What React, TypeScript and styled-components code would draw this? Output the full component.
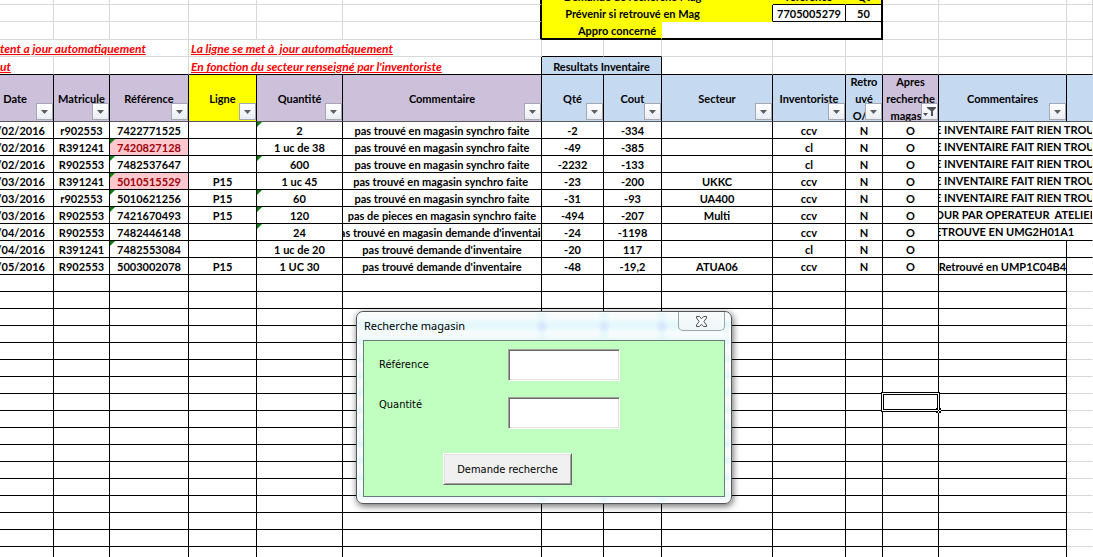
import React from 'react';
import styled, { createGlobalStyle, css } from 'styled-components';

const color = {
  line: '#000000',
  grid: '#d8d8d8',
  lilac: '#ccc0da',
  blue: '#c5d9f1',
  yellow: '#ffff00',
  form: '#c0ffc0',
};

const GlobalStyle = createGlobalStyle`
  *, *::before, *::after { box-sizing: border-box; }
  body {
    margin: 0;
    background: #fff;
    overflow: hidden;
  }
`;

const Workbook = styled.main`
  position: relative;
  width: 100%;
  height: 100vh;
  overflow: hidden;
  background: #fff;
  color: #000;
  font: bold 11px/16px Lato, Carlito, Calibri, sans-serif;
`;

const Sheet = styled.table`
  width: 100%;
  table-layout: fixed;
  border-collapse: separate;
  border-spacing: 0;
`;

const Column = styled.col<{ $width?: number }>`
  width: ${(p) => (p.$width ? `${p.$width}px` : 'auto')};
`;

const Row = styled.tr<{ $height?: number }>`
  height: ${(p) => p.$height ?? 17}px;
`;

type CellProps = { $right?: string; $bottom?: string; $thickRight?: boolean; $thickBottom?: boolean; $fill?: string };

const cellFrame = css<CellProps>`
  position: relative;
  padding: 0;
  background: ${(p) => p.$fill ?? 'transparent'};
  border: 0 solid;
  border-right: ${(p) => (p.$thickRight ? 2 : 1)}px solid ${(p) => p.$right ?? color.line};
  border-bottom: ${(p) => (p.$thickBottom ? 2 : 1)}px solid ${(p) => p.$bottom ?? color.line};
`;

const Cell = styled.td<CellProps>`
  ${cellFrame}
  vertical-align: bottom;
`;

const PlainCell = styled(Cell).attrs({ $right: color.grid, $bottom: color.grid })``;

const HeadCell = styled.th<CellProps>`
  ${cellFrame}
  border-bottom-color: #595959;
`;

const HeadText = styled.div<{ $inset?: number }>`
  display: flex;
  align-items: center;
  justify-content: center;
  height: 46px;
  padding-right: ${(p) => p.$inset ?? 0}px;
  overflow: hidden;
  line-height: 17px;
  text-align: center;
`;

const Value = styled.div<{ $align?: string; $tone?: string; $pad?: number }>`
  display: flex;
  justify-content: ${(p) => p.$align ?? 'center'};
  height: 16px;
  padding-right: ${(p) => p.$pad ?? 0}px;
  overflow: hidden;
  line-height: 18px;
  white-space: pre;
  color: ${(p) => p.$tone ?? 'inherit'};
`;

const Remark = styled.div`
  height: 16px;
  overflow: hidden;
  text-indent: -4px;
  white-space: pre;
`;

const Spill = styled.div<{ $height?: number; $end?: boolean }>`
  position: relative;
  z-index: 1;
  display: flex;
  justify-content: ${(p) => (p.$end ? 'flex-end' : 'center')};
  align-items: flex-end;
  height: ${(p) => p.$height ?? 16}px;
  padding-right: ${(p) => (p.$end ? 5 : 0)}px;
  line-height: 14px;
  white-space: nowrap;
`;

const Note = styled.div`
  padding-left: 2px;
  height: 16px;
  overflow: hidden;
  color: #f00;
  font-size: 12px;
  font-style: italic;
  line-height: 18px;
  text-decoration: underline;
  white-space: pre;
`;

const EdgeNote = styled(Note)`
  padding-left: 0;
`;

const ErrorMark = styled.span`
  position: absolute;
  top: 0;
  left: 0;
  border-top: 5px solid #008000;
  border-right: 5px solid transparent;
`;

const FilterButton = styled.button`
  position: absolute;
  right: 0;
  bottom: 1px;
  display: flex;
  align-items: center;
  justify-content: center;
  width: 17px;
  height: 17px;
  padding: 0;
  border: 1px solid #a3a8b3;
  background: linear-gradient(#fff, #e9edf3);
`;

const Selection = styled.span`
  position: absolute;
  inset: -2px;
  z-index: 1;
  border: 3px double #000;
  background: #fff;
`;

const FillHandle = styled.svg`
  position: absolute;
  right: -4px;
  bottom: -4px;
  width: 5px;
  height: 5px;
`;

const Dialog = styled.form`
  position: absolute;
  z-index: 2;
  top: 311px;
  left: 356px;
  width: 376px;
  padding: 0 6px 6px;
  border: 1px solid #53585c;
  border-radius: 7px;
  background:
    radial-gradient(circle at 185px 14px, #d6e2fc 0, transparent 7px),
    radial-gradient(circle at 247px 14px, #d6e2fc 0, transparent 7px),
    radial-gradient(circle at 305px 14px, #d6e2fc 0, transparent 7px),
    linear-gradient(90deg, transparent 178px, #e6f8fc 185px, transparent 192px, transparent 240px, #e6f8fc 247px, transparent 254px, transparent 298px, #e6f8fc 305px, transparent 312px),
    linear-gradient(transparent 8px, #e4f8fd 14px, transparent 21px),
    repeating-linear-gradient(#f8fbfc 0 5px, #e2f7fc 14px, #f8fbfc 17px);
  box-shadow: inset 0 0 0 1px rgba(255, 255, 255, 0.8), 1px 2px 7px rgba(0, 0, 0, 0.6);
  color: #000;
  font: 11px/16px 'DejaVu Sans Condensed', Tahoma, sans-serif;
`;

const TitleBar = styled.header`
  display: flex;
  justify-content: space-between;
  height: 28px;
`;

const Title = styled.h2`
  margin: 0;
  padding: 6px 1px;
  font: 11px/16px 'Noto Sans', 'Segoe UI', sans-serif;
`;

const CloseButton = styled.button`
  display: flex;
  align-items: center;
  justify-content: center;
  width: 47px;
  height: 19px;
  padding: 0;
  border: 1px solid #9aa6a8;
  border-top: 0;
  border-radius: 0 0 5px 5px;
  background: linear-gradient(#f8fbfb, #eef6f7);
`;

const Panel = styled.div`
  display: flex;
  flex-direction: column;
  height: 157px;
  padding: 8px 15px 0;
  border: 1px solid #6c7c7c;
  background: ${color.form};
`;

const Field = styled.div`
  display: flex;
  justify-content: space-between;
  margin-bottom: 16px;
  padding-right: 89px;
`;

const Label = styled.label<{ $top: number }>`
  padding-top: ${(p) => p.$top}px;
`;

const TextBox = styled.input`
  width: 112px;
  height: 32px;
  padding: 0 4px;
  border: 1px solid;
  border-color: #a0a0a0 #fff #fff #a0a0a0;
  border-radius: 0;
  box-shadow: inset 1px 1px 0 #696969, inset -1px -1px 0 #e3e3e3;
  background: #fff;
  font: inherit;
  outline: 0;
`;

const SubmitButton = styled.button`
  width: 129px;
  height: 32px;
  margin: 8px 0 0 64px;
  padding: 1px 0 0;
  border: 1px solid;
  border-color: #fff #696969 #696969 #fff;
  box-shadow: inset 1px 1px 0 #e3e3e3, inset -1px -1px 0 #a0a0a0;
  background: #f0f0f0;
  color: #000;
  font: inherit;
`;

const columns = [54, 56, 79, 68, 86, 199, 62, 58, 111, 73, 37, 56, 128];

type Heading = { text: string; fill: string; inset?: number; filtered?: boolean };

const headings: Heading[] = [
  { text: 'Date', fill: color.lilac, inset: 23 },
  { text: 'Matricule', fill: color.lilac },
  { text: 'Référence', fill: color.lilac },
  { text: 'Ligne', fill: color.yellow },
  { text: 'Quantité', fill: color.lilac },
  { text: 'Commentaire', fill: color.lilac },
  { text: 'Qté', fill: color.blue },
  { text: 'Cout', fill: color.blue },
  { text: 'Secteur', fill: color.blue },
  { text: 'Inventoriste', fill: color.blue },
  { text: 'Retro uvé O/N', fill: color.blue },
  { text: 'Apres recherche magasin', fill: color.lilac, filtered: true },
  { text: 'Commentaires', fill: color.blue },
];

type Entry = {
  cells: string[];
  note: string;
  spills?: boolean;
  refMark?: boolean;
  qtyMark?: boolean;
  duplicate?: boolean;
};

const noStock = 'E INVENTAIRE FAIT RIEN TROUVE';

const entries: Entry[] = [
  { cells: ['/02/2016', 'r902553', '7422771525', '', '2', 'pas trouvé en magasin synchro faite', '-2', '-334', '', 'ccv', 'N', 'O'], note: noStock, spills: true, qtyMark: true },
  { cells: ['/02/2016', 'R391241', '7420827128', '', '1 uc de 38', 'pas trouvé en magasin synchro faite', '-49', '-385', '', 'cl', 'N', 'O'], note: noStock, spills: true, refMark: true, duplicate: true },
  { cells: ['/02/2016', 'R902553', '7482537647', '', '600', 'pas trouve en magasin synchro faite', '-2232', '-133', '', 'cl', 'N', 'O'], note: noStock, spills: true, refMark: true, qtyMark: true },
  { cells: ['/03/2016', 'R391241', '5010515529', 'P15', '1 uc 45', 'pas trouvé en magasin synchro faite ', '-23', '-200', 'UKKC', 'ccv', 'N', 'O'], note: noStock, spills: true, refMark: true, duplicate: true },
  { cells: ['/03/2016', 'r902553', '5010621256', 'P15', '60', 'pas trouvé en magasin synchro faite', '-31', '-93', 'UA400', 'ccv', 'N', 'O'], note: noStock, spills: true, refMark: true, qtyMark: true },
  { cells: ['/03/2016', 'R902553', '7421670493', 'P15', '120', 'pas de pieces en magasin synchro faite', '-494', '-207', 'Multi', 'ccv', 'N', 'O'], note: 'OUR PAR OPERATEUR  ATELIER', spills: true, refMark: true, qtyMark: true },
  { cells: ['/04/2016', 'R902553', '7482446148', '', '24', "pas trouvé en magasin demande d'inventaire", '-24', '-1198', '', 'ccv', 'N', 'O'], note: 'ETROUVE EN UMG2H01A1', spills: true, qtyMark: true },
  { cells: ['/04/2016', 'R391241', '7482553084', '', '1 uc de 20', "pas trouvé demande d'inventaire", '-20', '117', '', 'cl', 'N', 'O'], note: '', refMark: true },
  { cells: ['/05/2016', 'R902553', '5003002078', 'P15', '1 UC 30', "pas trouvé demande d'inventaire", '-48', '-19,2', 'ATUA06', 'ccv', 'N', 'O'], note: 'Retrouvé en UMP1C04B4' },
];

const blankRows = Array.from({ length: 17 }, (_, i) => i);
const ACTIVE_ROW = 7;
const ACTIVE_COLUMN = 11;
const DATE_COLUMN = 0;
const REF_COLUMN = 2;
const QTY_COLUMN = 4;

function Blank({ count }: { count: number }) {
  return (
    <>
      {Array.from({ length: count }, (_, i) => (
        <PlainCell key={i} />
      ))}
    </>
  );
}

function ArrowIcon() {
  return (
    <svg width="7" height="4" viewBox="0 0 7 4" aria-hidden="true">
      <path d="M0 0h7L3.5 4z" fill="#5b5f68" />
    </svg>
  );
}

function FunnelIcon() {
  return (
    <svg width="13" height="13" viewBox="0 0 13 13" aria-hidden="true">
      <path d="M4 2h9v1l-3 3v5H8V6L4 3z" fill="#4d5058" />
      <path d="M0 8h5L2.5 11z" fill="#4d5058" />
    </svg>
  );
}

function SearchDialog() {
  return (
    <Dialog aria-label="Recherche magasin" onSubmit={(e) => e.preventDefault()}>
      <TitleBar>
        <Title>Recherche magasin</Title>
        <CloseButton type="button" aria-label="Fermer">
          <svg width="13" height="11" viewBox="0 0 13 11" aria-hidden="true">
            <path
              d="M1.5.5h3l2 2.300 2-2.300h3V2L8.800 5.500l2.700 3.500v1.500h-3l-2-2.300-2 2.300h-3V9l2.700-3.500L1.500 2z"
              fill="#fff"
              stroke="#4b5062"
              strokeWidth="1"
            />
          </svg>
        </CloseButton>
      </TitleBar>
      <Panel>
        <Field>
          <Label htmlFor="reference" $top={8}>Référence</Label>
          <TextBox id="reference" type="text" />
        </Field>
        <Field>
          <Label htmlFor="quantite" $top={0}>Quantité</Label>
          <TextBox id="quantite" type="text" />
        </Field>
        <SubmitButton type="submit">Demande recherche</SubmitButton>
      </Panel>
    </Dialog>
  );
}

export default function App() {
  return (
    <Workbook>
      <GlobalStyle />
      <Sheet>
        <colgroup>
          {columns.map((width, i) => (
            <Column key={i} $width={width} />
          ))}
          <Column />
        </colgroup>
        <thead>
          <Row $height={5}>
            <Blank count={5} />
            <Cell $thickRight $bottom={color.grid} />
            <Cell $fill={color.yellow} $right={color.yellow} $bottom={color.yellow} />
            <Cell $fill={color.yellow} $right={color.yellow} $bottom={color.yellow}>
              <Spill $height={4}>Demande de recherche Mag</Spill>
            </Cell>
            <Cell $fill={color.yellow} $right={color.yellow} $bottom={color.yellow} />
            <Cell $fill={color.yellow} $right={color.yellow}>
              <Spill $height={4}>référence</Spill>
            </Cell>
            <Cell $fill={color.yellow} $thickRight>
              <Spill $height={4}>Qt</Spill>
            </Cell>
            <Blank count={3} />
          </Row>
          <Row>
            <Blank count={5} />
            <Cell $thickRight $bottom={color.grid} />
            <Cell $fill={color.yellow} $right={color.yellow} $bottom={color.yellow} />
            <Cell $fill={color.yellow} $right={color.yellow} $bottom={color.yellow}>
              <Spill>Prévenir si retrouvé en Mag</Spill>
            </Cell>
            <Cell $fill={color.yellow} $bottom={color.yellow} />
            <Cell><Spill>7705005279</Spill></Cell>
            <Cell $thickRight><Spill>50</Spill></Cell>
            <Blank count={3} />
          </Row>
          <Row $height={18}>
            <Blank count={5} />
            <Cell $thickRight $bottom={color.grid} />
            <Cell colSpan={2} $fill={color.yellow} $right={color.yellow} $thickBottom>
              <Spill $end>Appro concerné</Spill>
            </Cell>
            <Cell colSpan={3} $thickRight $thickBottom />
            <Blank count={3} />
          </Row>
          <Row>
            <PlainCell colSpan={3}>
              <EdgeNote>tent a jour automatiquement</EdgeNote>
            </PlainCell>
            <PlainCell colSpan={3}>
              <Note>La ligne se met à  jour automatiquement</Note>
            </PlainCell>
            <Cell $right={color.grid} />
            <Cell $right={color.grid} />
            <Blank count={6} />
          </Row>
          <Row $height={18}>
            <Cell $right={color.grid}>
              <EdgeNote>ut</EdgeNote>
            </Cell>
            <Cell $right={color.grid} />
            <Cell $right={color.grid} />
            <Cell colSpan={3}>
              <Note>En fonction du secteur renseigné par l'inventoriste</Note>
            </Cell>
            <Cell colSpan={2} $fill={color.blue}>
              <Value>Resultats Inventaire</Value>
            </Cell>
            {[0, 1, 2, 3, 4, 5].map((i) => (
              <Cell key={i} $right={color.grid} />
            ))}
          </Row>
          <Row $height={47}>
            {headings.map((h) => (
              <HeadCell key={h.text} scope="col" $fill={h.fill}>
                <HeadText $inset={h.inset}>{h.text}</HeadText>
                <FilterButton type="button" aria-label={`Filtrer ${h.text}`}>
                  {h.filtered ? <FunnelIcon /> : <ArrowIcon />}
                </FilterButton>
              </HeadCell>
            ))}
            <HeadCell $fill={color.blue} $right={color.blue} />
          </Row>
        </thead>
        <tbody>
          {entries.map((entry, r) => (
            <Row key={r}>
              {entry.cells.map((text, c) => (
                <Cell key={c} $fill={c === REF_COLUMN && entry.duplicate ? '#ffc7ce' : undefined}>
                  {((c === REF_COLUMN && entry.refMark) || (c === QTY_COLUMN && entry.qtyMark)) && <ErrorMark />}
                  <Value
                    $align={c === DATE_COLUMN ? 'flex-end' : undefined}
                    $pad={c === DATE_COLUMN ? 8 : undefined}
                    $tone={c === REF_COLUMN && entry.duplicate ? '#9c0006' : undefined}
                  >
                    {text}
                  </Value>
                </Cell>
              ))}
              {entry.spills ? (
                <Cell colSpan={2} $right="transparent">
                  <Remark>{entry.note}</Remark>
                </Cell>
              ) : (
                <>
                  <Cell><Value>{entry.note}</Value></Cell>
                  <Cell $right="transparent" />
                </>
              )}
            </Row>
          ))}
          {blankRows.map((r) => (
            <Row key={r}>
              {columns.map((_, c) => (
                <Cell key={c}>
                  {r === ACTIVE_ROW && c === ACTIVE_COLUMN && (
                    <Selection>
                      <FillHandle viewBox="0 0 5 5" shapeRendering="crispEdges" aria-hidden="true">
                        <path d="M0 0h5v5H0z" fill="#fff" />
                        <path d="M0 0h2v2H0zM3 0h2v2H3zM0 3h2v2H0zM3 3h2v2H3zM2 2h1v1H2z" fill="#000" />
                      </FillHandle>
                    </Selection>
                  )}
                </Cell>
              ))}
              <Cell $right="transparent" $bottom={color.grid} />
            </Row>
          ))}
        </tbody>
      </Sheet>
      <SearchDialog />
    </Workbook>
  );
}
